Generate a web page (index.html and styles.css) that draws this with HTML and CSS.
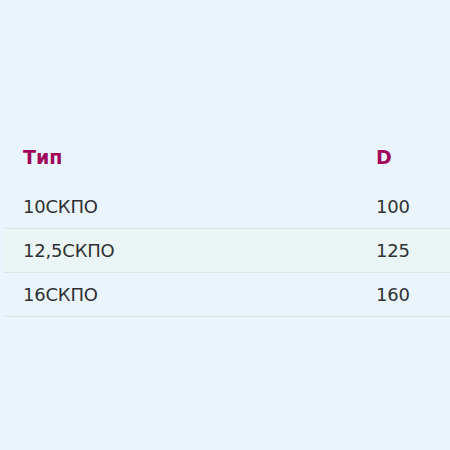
FILE: index.html
```html
<!DOCTYPE html>
<html lang="ru">
<head>
<meta charset="utf-8">
<link rel="stylesheet" href="styles.css">
</head>
<body>
<div class="wrap">
  <table class="spec">
    <thead>
      <tr><th class="c1">Тип</th><th class="c2">D</th></tr>
    </thead>
    <tbody>
      <tr><td class="c1">10СКПО</td><td class="c2">100</td></tr>
      <tr class="alt"><td class="c1">12,5СКПО</td><td class="c2">125</td></tr>
      <tr><td class="c1">16СКПО</td><td class="c2">160</td></tr>
    </tbody>
  </table>
</div>
</body>
</html>
```
FILE: styles.css
```css
html, body {
  margin: 0;
  padding: 0;
  background: #eaf4fd;
}
body {
  font-family: "DejaVu Sans", Verdana, sans-serif;
  color: #2f3133;
  width: 450px;
  height: 450px;
  overflow: hidden;
}
.wrap {
  padding: 135px 0 0 4px;
}
.spec {
  border-collapse: collapse;
  width: 446px;
}
.spec th {
  text-align: left;
  font-weight: bold;
  font-size: 19px;
  color: #a1065c;
  height: 44px;
  padding: 0 0 6px 19px;
  vertical-align: middle;
}
.spec td {
  font-size: 18px;
  letter-spacing: -0.2px;
  height: 43px;
  padding: 0 0 0 19px;
  border-bottom: 1px solid #e2e4df;
  vertical-align: middle;
}
.spec .c1 {
  width: 334px;
}
.spec .alt td {
  background: #ecf5f6;
}
```
